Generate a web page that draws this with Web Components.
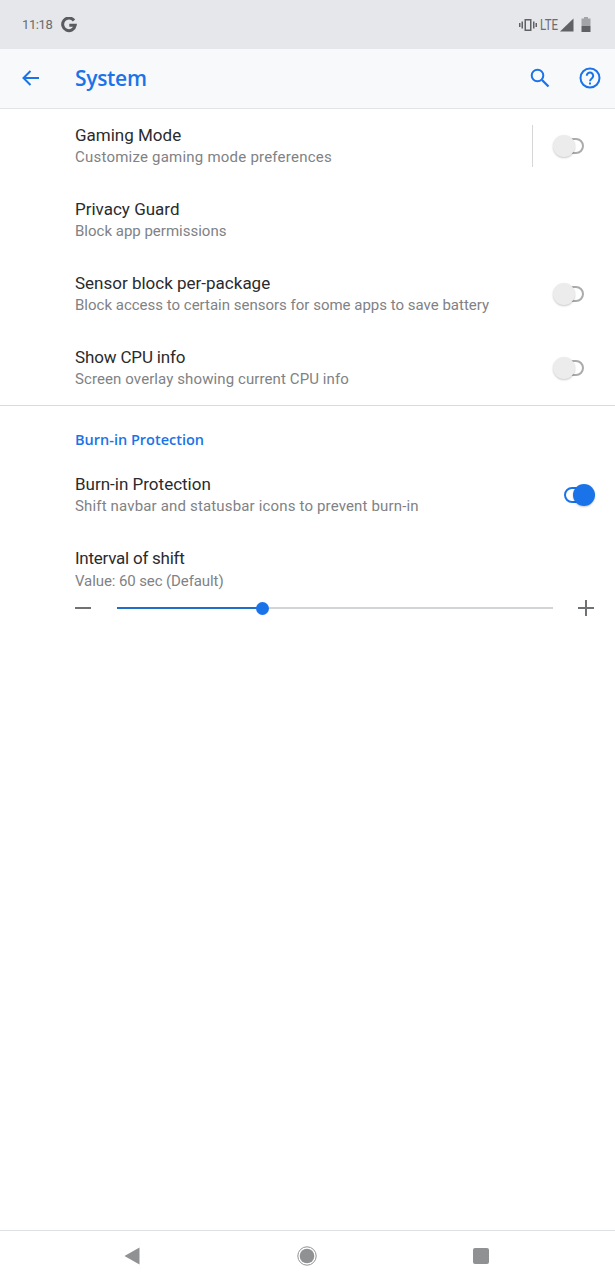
<!DOCTYPE html>
<html>
<head>
<meta charset="utf-8">
<title>System</title>
<style>
    html, body { margin: 0; padding: 0; background: #fff; }
    body {
        width: 615px;
        height: 1280px;
        overflow: hidden;
        display: flex;
        flex-direction: column;
        font-family: Roboto, "Liberation Sans", sans-serif;
    }
    settings-list { flex: 1; }
</style>
</head>
<body>
<status-bar></status-bar>
<app-bar title="System"></app-bar>
<settings-list>
    <pref-row title="Gaming Mode" summary="Customize gaming mode preferences" toggle="off" divider style="--sum-ls:.22px"></pref-row>
    <pref-row title="Privacy Guard" summary="Block app permissions"></pref-row>
    <pref-row title="Sensor block per-package" summary="Block access to certain sensors for some apps to save battery" toggle="off"></pref-row>
    <pref-row title="Show CPU info" summary="Screen overlay showing current CPU info" toggle="off" style="--sum-ls:.1px;--title-ls:-.15px"></pref-row>
    <pref-category title="Burn-in Protection"></pref-category>
    <pref-row title="Burn-in Protection" summary="Shift navbar and statusbar icons to prevent burn-in" toggle="on" style="--sum-ls:.16px"></pref-row>
    <pref-slider title="Interval of shift" summary="Value: 60 sec (Default)" percent="33.3"></pref-slider>
</settings-list>
<nav-bar></nav-bar>

<script>
class StatusBar extends HTMLElement {
    constructor() {
        super()
        this.attachShadow({ mode: 'open' })
    }
    connectedCallback() {
        this.shadowRoot.innerHTML = `
        <style>
            :host {
                display: flex;
                align-items: center;
                height: 49px;
                flex: none;
                padding: 0 24px 0 22px;
                box-sizing: border-box;
                background: #e6e7ea;
                color: #6a6c6f;
                font-size: 13px;
            }
            .right { margin-left: auto; display: flex; align-items: center; }
            .lte { font-size: 14px; margin: 0 2px 0 3px; transform: scaleX(.82); width: 18px; display: flex; justify-content: center; }
            svg { display: block; fill: #5f6164; }
            .time { letter-spacing: -.4px; width: 28px; white-space: nowrap; }
            .g { margin-left: 11px; fill: none; stroke: #5a5b5e; stroke-width: 3; }
        </style>
        <span class="time">11:18</span>
        <svg class="g" width="16" height="16" viewBox="0 0 16 16"><path d="M13 3.500A6.300 6.300 0 1 0 14.200 8.300H8.300"/></svg>
        <span class="right">
            <svg width="18" height="14" viewBox="0 0 18 14">
                <path d="M0 5h1.500v4H0zM2.500 3.500H4v7H2.500zM14 3.500h1.500v7H14zM16.500 5H18v4h-1.500z"/>
                <path fill-rule="evenodd" d="M5.500 1h7v12h-7zM7 2.500v9h4v-9z"/>
            </svg>
            <span class="lte">LTE</span>
            <svg width="14" height="14" viewBox="0 0 14 14"><path d="M13.500 0.500v13H0z"/></svg>
            <svg style="margin-left:7px" width="10" height="15" viewBox="0 0 10 15">
                <path d="M3 0h4v1.500h2.500V9H.5V1.500H3z" opacity=".5"/>
                <path d="M.5 9h9v6h-9z"/>
            </svg>
        </span>
        `
    }
}

class AppBar extends HTMLElement {
    constructor() {
        super()
        this.attachShadow({ mode: 'open' })
    }
    connectedCallback() {
        this.shadowRoot.innerHTML = `
        <style>
            :host {
                display: flex;
                align-items: center;
                height: 60px;
                flex: none;
                box-sizing: border-box;
                padding: 0 13px 1px 19px;
                background: #f8f9fb;
                border-bottom: 1px solid #e3e4e6;
                color: #1a73e8;
            }
            h1 {
                margin: 0 0 0 32px;
                font-size: 21px;
                font-weight: 600;
                font-family: "Open Sans", Roboto, sans-serif;
                letter-spacing: -.3px;
            }
            svg { display: block; fill: none; stroke: currentColor; stroke-width: 2; }
            .actions { margin-left: auto; display: flex; gap: 26px; align-items: center; }
        </style>
        <svg width="24" height="24" viewBox="0 0 24 24"><path d="M20 12H5M11.500 5 4.500 12l7 7"/></svg>
        <h1>${this.getAttribute('title')}</h1>
        <div class="actions">
            <svg width="24" height="24" viewBox="0 0 24 24"><circle cx="9.500" cy="9.500" r="5.800"/><path d="M14 14l6.500 6.500" stroke-width="2.300"/></svg>
            <svg width="24" height="24" viewBox="0 0 24 24">
                <circle cx="12" cy="12" r="9.500"/>
                <path d="M8.800 9.800a3.200 3.200 0 1 1 5.400 2.200c-1.200 1-2.200 1.700-2.200 3.200"/>
                <path d="M12 16.600v2" />
            </svg>
        </div>
        `
    }
}

class SettingsList extends HTMLElement {
    constructor() {
        super()
        this.attachShadow({ mode: 'open' })
    }
    connectedCallback() {
        this.shadowRoot.innerHTML = `
        <style>
            :host { display: block; background: #fff; }
        </style>
        <slot></slot>
        `
    }
}

class PrefToggle extends HTMLElement {
    constructor() {
        super()
        this.attachShadow({ mode: 'open' })
    }
    connectedCallback() {
        this.shadowRoot.innerHTML = `
        <style>
            :host {
                display: block;
                position: relative;
                width: 42px;
                height: 22px;
                flex: none;
            }
            .track {
                position: absolute;
                left: 1px;
                top: 3px;
                width: 30px;
                height: 16px;
                box-sizing: border-box;
                border-radius: 8px;
                border: 2px solid #a9abad;
            }
            .thumb {
                position: absolute;
                left: 0;
                top: 0;
                width: 22px;
                height: 22px;
                border-radius: 50%;
                background: #ececec;
                box-shadow: 0 1px 2px rgba(0,0,0,.22);
            }
            :host([on]) .track { left: 11px; border-color: #1a73e8; }
            :host([on]) .thumb { left: 20px; background: #1a73e8; }
        </style>
        <div class="track"></div>
        <div class="thumb"></div>
        `
    }
}

class PrefRow extends HTMLElement {
    constructor() {
        super()
        this.attachShadow({ mode: 'open' })
    }
    connectedCallback() {
        let toggle = this.getAttribute('toggle')
        let control = ''
        if (toggle) {
            control = `<pref-toggle ${toggle === 'on' ? 'on' : ''}></pref-toggle>`
        }
        this.shadowRoot.innerHTML = `
        <style>
            :host {
                display: flex;
                align-items: center;
                height: 74px;
                box-sizing: border-box;
                padding: 0 20px 0 75px;
            }
            .text { flex: 1; min-width: 0; margin-top: -2px; }
            .title { font-size: 17px; line-height: 22px; color: #2a2b2e; letter-spacing: var(--title-ls, 0); }
            .summary { font-size: 15px; line-height: 20px; margin-top: 1px; color: #808285; letter-spacing: var(--sum-ls, 0); }
            .sep { width: 1px; height: 42px; background: #d5d6d8; margin-right: 20px; }
        </style>
        <div class="text">
            <div class="title">${this.getAttribute('title')}</div>
            <div class="summary">${this.getAttribute('summary')}</div>
        </div>
        ${this.hasAttribute('divider') ? '<div class="sep"></div>' : ''}
        ${control}
        `
    }
}

class PrefCategory extends HTMLElement {
    constructor() {
        super()
        this.attachShadow({ mode: 'open' })
    }
    connectedCallback() {
        this.shadowRoot.innerHTML = `
        <style>
            :host {
                display: block;
                border-top: 1px solid #dadbdd;
                padding: 24px 0 8px 75px;
                font-size: 14.5px;
                line-height: 20px;
                font-weight: 600;
                font-family: "Open Sans", Roboto, sans-serif;
                color: #1a73e8;
            }
        </style>
        ${this.getAttribute('title')}
        `
    }
}

class PrefSlider extends HTMLElement {
    constructor() {
        super()
        this.attachShadow({ mode: 'open' })
    }
    connectedCallback() {
        this.shadowRoot.innerHTML = `
        <style>
            :host {
                display: block;
                padding: 15px 21px 0 75px;
            }
            .title { font-size: 17px; line-height: 22px; color: #2a2b2e; letter-spacing: -.25px; }
            .summary { font-size: 15px; line-height: 20px; margin-top: 2px; color: #808285; letter-spacing: -.1px; }
            .bar { display: flex; align-items: center; height: 22px; margin-top: 6px; }
            svg { display: block; flex: none; stroke: #6f7173; stroke-width: 2; }
            .track { position: relative; flex: 1; height: 2px; margin: 0 25px 0 26px; background: #d3d4d6; }
            .fill { height: 100%; background: #1f6fc9; width: ${this.getAttribute('percent')}%; }
            .knob {
                position: absolute;
                top: -5.500px;
                left: ${this.getAttribute('percent')}%;
                margin-left: -6.500px;
                width: 13px;
                height: 13px;
                border-radius: 50%;
                background: #1a73e8;
            }
        </style>
        <div class="title">${this.getAttribute('title')}</div>
        <div class="summary">${this.getAttribute('summary')}</div>
        <div class="bar">
            <svg width="16" height="16" viewBox="0 0 16 16"><path d="M0 8h16"/></svg>
            <div class="track"><div class="fill"></div><div class="knob"></div></div>
            <svg width="16" height="16" viewBox="0 0 16 16"><path d="M0 8h16M8 0v16"/></svg>
        </div>
        `
    }
}

class NavBar extends HTMLElement {
    constructor() {
        super()
        this.attachShadow({ mode: 'open' })
    }
    connectedCallback() {
        this.shadowRoot.innerHTML = `
        <style>
            :host {
                display: flex;
                align-items: center;
                justify-content: space-between;
                flex: none;
                height: 50px;
                box-sizing: border-box;
                border-top: 1px solid #e0e1e3;
                padding: 1px 126px 0 124px;
                background: #fff;
            }
            svg { display: block; fill: #8f9193; }
        </style>
        <svg width="16" height="18" viewBox="0 0 16 18"><path d="M15.500 0.500v17L0.500 9z"/></svg>
        <svg width="20" height="20" viewBox="0 0 20 20"><circle cx="10" cy="10" r="9.200" fill="none" stroke="#8f9193" stroke-width="1"/><circle cx="10" cy="10" r="7.300"/></svg>
        <svg width="16" height="16" viewBox="0 0 16 16"><rect width="16" height="16" rx="2"/></svg>
        `
    }
}

customElements.define('status-bar', StatusBar)
customElements.define('app-bar', AppBar)
customElements.define('settings-list', SettingsList)
customElements.define('pref-toggle', PrefToggle)
customElements.define('pref-row', PrefRow)
customElements.define('pref-category', PrefCategory)
customElements.define('pref-slider', PrefSlider)
customElements.define('nav-bar', NavBar)
</script>
</body>
</html>
